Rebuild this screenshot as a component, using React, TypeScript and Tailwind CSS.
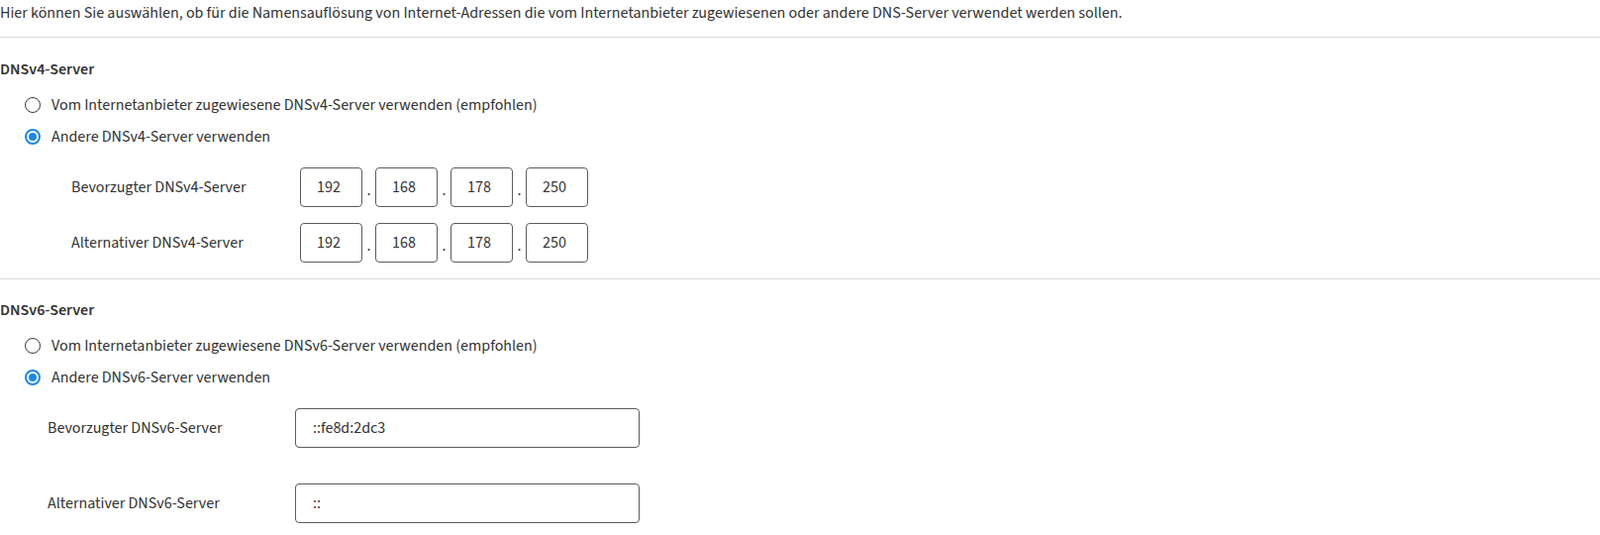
import React from "react";

const FONT = "font-['Source_Sans_Pro','Source_Sans_3',Lato,'Liberation_Sans',sans-serif]";

type RadioProps = { checked?: boolean; label: string };

function Radio({ checked, label }: RadioProps) {
  return (
    <label className="flex h-[32px] items-center pl-[25px]">
      {checked ? (
        <span className="flex h-[16px] w-[16px] items-center justify-center rounded-full border-2 border-[#1e88e5] bg-white">
          <span className="h-[8px] w-[8px] rounded-full bg-[#1e88e5]" />
        </span>
      ) : (
        <span className="h-[16px] w-[16px] rounded-full border-[1.5px] border-[#3a3a3a]" />
      )}
      <span className="ml-[11px]">{label}</span>
    </label>
  );
}

function IpRow({ label, octets }: { label: string; octets: string[] }) {
  return (
    <div className="flex h-[40px] items-center">
      <div className="w-[231px] pl-[72px] box-content">{label}</div>
      <div className="flex items-end">
        {octets.map((o, i) => (
          <div key={i} className="flex items-end">
            {i > 0 && <span className="w-[13px] pb-[9px] text-center leading-none">.</span>}
            <input
              readOnly
              value={o}
              className="h-[40px] w-[63px] rounded-[4px] border border-[#5c5c5c] bg-white pl-[16px] text-[16px] text-[#333] outline-none"
            />
          </div>
        ))}
      </div>
    </div>
  );
}

function V6Row({ label, value }: { label: string; value: string }) {
  return (
    <div className="flex h-[40px] items-center">
      <div className="w-[250px] pl-[48px] box-content">{label}</div>
      <input
        readOnly
        value={value}
        className="h-[40px] w-[348px] rounded-[4px] border border-[#5c5c5c] bg-white pl-[17px] text-[16px] text-[#333] outline-none"
      />
    </div>
  );
}

export default function App() {
  return (
    <div className={`${FONT} min-h-[540px] w-[1616px] bg-white text-[16px] leading-[20px] text-[#333]`}>
      <p className="pt-[3px]">
        Hier können Sie auswählen, ob für die Namensauflösung von Internet-Adressen die vom Internetanbieter
        zugewiesenen oder andere DNS-Server verwendet werden sollen.
      </p>
      <hr className="mt-[14px] border-t border-[#d9d9d9]" />

      <section>
        <h3 className="mt-[22px] font-semibold">DNSv4-Server</h3>
        <div className="mt-[10px] flex flex-col">
          <Radio label="Vom Internetanbieter zugewiesene DNSv4-Server verwenden (empfohlen)" />
          <Radio checked label="Andere DNSv4-Server verwenden" />
        </div>
        <div className="mt-[15px] flex flex-col gap-[16px]">
          <IpRow label="Bevorzugter DNSv4-Server" octets={["192", "168", "178", "250"]} />
          <IpRow label="Alternativer DNSv4-Server" octets={["192", "168", "178", "250"]} />
        </div>
      </section>
      <hr className="mt-[16px] border-t border-[#d9d9d9]" />

      <section>
        <h3 className="mt-[21px] font-semibold">DNSv6-Server</h3>
        <div className="mt-[10px] flex flex-col">
          <Radio label="Vom Internetanbieter zugewiesene DNSv6-Server verwenden (empfohlen)" />
          <Radio checked label="Andere DNSv6-Server verwenden" />
        </div>
        <div className="mt-[15px] flex flex-col gap-[36px]">
          <V6Row label="Bevorzugter DNSv6-Server" value="::fe8d:2dc3" />
          <V6Row label="Alternativer DNSv6-Server" value="::" />
        </div>
      </section>
    </div>
  );
}
